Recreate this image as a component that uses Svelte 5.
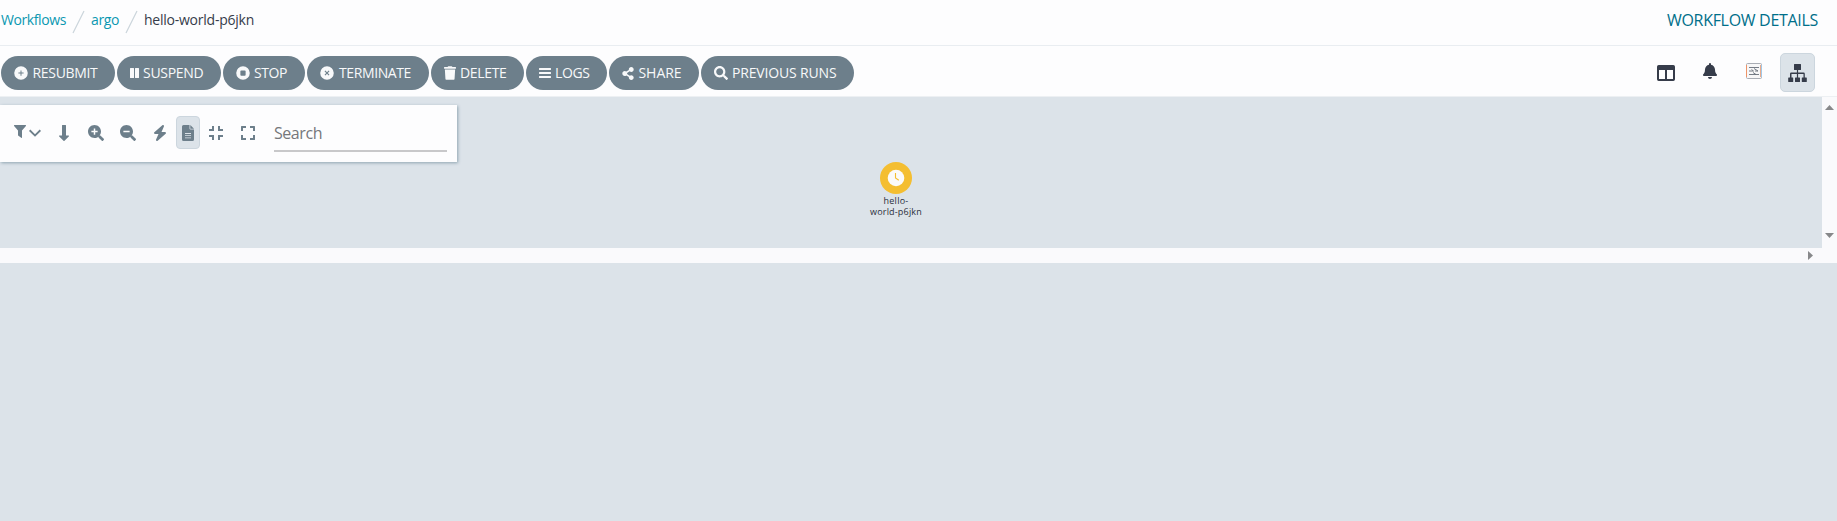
<script>
  const icons = {
    plus: { box: '0 0 512 512', d: 'M256 8a248 248 0 1 0 0 496a248 248 0 0 0 0-496zM238 160h36v78h78v36h-78v78h-36v-78h-78v-36h78z' },
    pause: { box: '0 0 9 10', d: 'M.5 0h3q.5 0 .5.5v9q0 .5-.5.5h-3q-.5 0-.5-.5v-9q0-.5.5-.5zM5.500 0h3q.5 0 .5.5v9q0 .5-.5.5h-3q-.5 0-.5-.5v-9q0-.5.5-.5z' },
    stop: { box: '0 0 512 512', d: 'M256 8a248 248 0 1 0 0 496a248 248 0 0 0 0-496zM192 160h128q32 0 32 32v128q0 32-32 32h-128q-32 0-32-32v-128q0-32 32-32z' },
    times: { box: '0 0 512 512', d: 'M256 8a248 248 0 1 0 0 496a248 248 0 0 0 0-496zM196 166l60 60l60-60l30 30l-60 60l60 60l-30 30l-60-60l-60 60l-30-30l60-60l-60-60z' },
    trash: { box: '0 0 448 512', d: 'M432 32H312l-9.400-18.700A24 24 0 0 0 281.100 0H166.800a23.700 23.700 0 0 0-21.400 13.300L136 32H16A16 16 0 0 0 0 48v32a16 16 0 0 0 16 16h416a16 16 0 0 0 16-16V48a16 16 0 0 0-16-16zM32 128l21.200 339a48 48 0 0 0 47.900 45h245.800a48 48 0 0 0 47.900-45L416 128z' },
    bars: { box: '0 0 12 10', d: 'M.4 0h11.200q.4 0 .4.400v1.200q0 .4-.4.400h-11.200q-.4 0-.4-.4v-1.200q0-.4.400-.4zM.4 4h11.200q.4 0 .4.400v1.200q0 .4-.4.400h-11.200q-.4 0-.4-.4v-1.200q0-.4.400-.4zM.4 8h11.200q.4 0 .4.400v1.200q0 .4-.4.400h-11.200q-.4 0-.4-.4v-1.200q0-.4.400-.4z' },
    share: { box: '0 0 448 512', d: 'M352 320c-22.600 0-43.400 7.800-59.800 20.900l-102.500-64.100a96.600 96.600 0 0 0 0-41.700l102.500-64.100C308.600 184.200 329.400 192 352 192c53 0 96-43 96-96S405 0 352 0s-96 43-96 96c0 7.200.8 14.100 2.300 20.800L155.800 180.900C139.400 167.800 118.600 160 96 160c-53 0-96 43-96 96s43 96 96 96c22.600 0 43.400-7.800 59.800-20.900l102.500 64.100A96.300 96.300 0 0 0 256 416c0 53 43 96 96 96s96-43 96-96s-43-96-96-96z' },
    search: { box: '0 0 512 512', d: 'M505 442.700L405.300 343c-4.500-4.500-10.600-7-17-7H372c27.600-35.300 44-79.700 44-128C416 93.100 322.900 0 208 0S0 93.100 0 208s93.100 208 208 208c48.300 0 92.700-16.400 128-44v16.300c0 6.400 2.500 12.500 7 17l99.700 99.700c9.400 9.400 24.600 9.400 33.900 0l28.300-28.300c9.400-9.400 9.400-24.600.1-34zM208 336c-70.700 0-128-57.200-128-128c0-70.700 57.200-128 128-128c70.700 0 128 57.200 128 128c0 70.700-57.200 128-128 128z' },
    filter: { box: '0 0 12 13', d: 'M.5 0h11q.9.100.4 1L8 5.600V12.400q-.1.800-.8.400L4.400 10.800Q4 10.500 4 10V5.600L.1 1Q-.3.100.5 0z' },
    chevron: { box: '0 0 12 8', d: 'M1.300.6L6 5.200L10.700.6L12 1.900L6 7.700L0 1.900z' },
    down: { box: '0 0 10 16', d: 'M3.400 0h3.200q.4 0 .4.500V10.500h2.500q.9.100.3.900L5.500 15.800q-.5.400-1 0L.2 11.400q-.6-.8.300-.9H3V.5q0-.5.4-.5z' },
    zoomin: { box: '0 0 512 512', d: 'M505 442.700L405.300 343c-4.500-4.500-10.600-7-17-7H372c27.600-35.300 44-79.700 44-128C416 93.100 322.900 0 208 0S0 93.100 0 208s93.100 208 208 208c48.300 0 92.700-16.400 128-44v16.300c0 6.400 2.500 12.500 7 17l99.700 99.700c9.400 9.400 24.600 9.400 33.900 0l28.300-28.300c9.400-9.400 9.400-24.600.1-34zM184 108h48v76h76v48h-76v76h-48v-76h-76v-48h76z' },
    zoomout: { box: '0 0 512 512', d: 'M505 442.700L405.300 343c-4.500-4.500-10.600-7-17-7H372c27.600-35.300 44-79.700 44-128C416 93.100 322.900 0 208 0S0 93.100 0 208s93.100 208 208 208c48.300 0 92.700-16.400 128-44v16.300c0 6.400 2.500 12.500 7 17l99.700 99.700c9.400 9.400 24.600 9.400 33.900 0l28.300-28.300c9.400-9.400 9.400-24.600.1-34zM108 184h200v48H108z' },
    bolt: { box: '32 0 384 512', d: 'M349.400 44.600c5.900-13.700 1.500-29.700-10.600-38.500s-28.600-8-39.900 1.800l-256 224c-10 8.800-13.600 22.900-8.900 35.300S50.700 288 64 288H175.500L98.600 467.400c-5.900 13.700-1.500 29.700 10.600 38.500s28.600 8 39.900-1.800l256-224c10-8.800 13.600-22.900 8.900-35.300s-16.600-20.700-30-20.700H272.500z' },
    file: { box: '0 0 12 16', d: 'M1.500 0H7.500V3.500Q7.500 4.500 8.500 4.500H12V14.500Q12 16 10.500 16H1.500Q0 16 0 14.500V1.500Q0 0 1.500 0zM8.300 0L12 3.700H8.300zM3 8v.9h6V8zM3 10.200v.9h6v-.9zM3 12.400v.9h6v-.9z' },
    compress: { box: '0 0 14 14', d: 'M3 0h2v5H0V3h3zM9 0h2v3h3v2H9zM0 9h5v5H3v-3H0zM9 9h5v2h-3v3H9z' },
    expand: { box: '0 0 14 14', d: 'M.6 0H5v2H2v3H0V.6Q0 0 .6 0zM9 0h4.400q.6 0 .6.600V5h-2V2H9zM0 9h2v3h3v2H.6q-.6 0-.6-.6zM12 9h2v4.400q0 .6-.6.600H9v-2h3z' },
    columns: { box: '0 0 18 16', d: 'M1.700 0h14.600Q18 0 18 1.700v12.600q0 1.700-1.700 1.700H1.700Q0 16 0 14.300V1.700Q0 0 1.700 0zM2 5v9h6V5zM10 5v9h6V5z' },
    bell: { box: '0 0 448 512', d: 'M224 512c35.300 0 63.900-28.700 63.900-64H160.100c0 35.300 28.500 64 63.900 64zm215.400-149.700c-19.300-20.800-55.500-52-55.500-154.300c0-77.700-54.500-139.900-127.900-155.200V32a32 32 0 1 0-64 0v20.800C118.600 68.100 64.100 130.300 64.100 208c0 102.300-36.200 133.500-55.500 154.300A31.200 31.200 0 0 0 0 384c.1 16.400 13 32 32.100 32h383.800c19.100 0 32-15.600 32.100-32a31.200 31.200 0 0 0-8.600-21.700z' },
    sitemap: { box: '0 0 19 18', d: 'M6.500 0h6q.5 0 .5.500v5q0 .5-.5.500H10.100v2.500H15.500q1.300 0 1.300 1.300V13.500h1.500q.5 0 .5.500v3.500q0 .5-.5.500h-4q-.5 0-.5-.5V14q0-.5.500-.5h1.200v-3.500H10.100v3.500h1.400q.5 0 .5.500v3.500q0 .5-.5.500h-4q-.5 0-.5-.5V14q0-.5.500-.5h1.400v-3.500H3.500v3.500h1.200q.5 0 .5.500v3.500q0 .5-.5.500h-4q-.5 0-.5-.5V14q0-.5.500-.5h1.300V9.800q0-1.300 1.300-1.300h5.600V6H6.500q-.5 0-.5-.5v-5q0-.5.500-.5z' }
  };

  const actions = [
    { label: 'RESUBMIT', icon: 'plus', iw: 14, left: 12.5, gap: 5, text: 65, width: 114 },
    { label: 'SUSPEND', icon: 'pause', iw: 9, left: 13, gap: 4, text: 60.5, width: 104 },
    { label: 'STOP', icon: 'stop', iw: 14, left: 12.5, gap: 4.5, text: 33, width: 82 },
    { label: 'TERMINATE', icon: 'times', iw: 14, left: 13, gap: 5, text: 72, width: 122 },
    { label: 'DELETE', icon: 'trash', iw: 12, left: 13, gap: 4, text: 46.5, width: 93 },
    { label: 'LOGS', icon: 'bars', iw: 12, left: 13, gap: 4, text: 34.5, width: 81 },
    { label: 'SHARE', icon: 'share', iw: 12, left: 13, gap: 4.5, text: 43, width: 90 },
    { label: 'PREVIOUS RUNS', icon: 'search', iw: 14, left: 13, gap: 4, text: 104.5, width: 153 }
  ];

  const tools = [
    { icon: 'down', w: 10, h: 16 },
    { icon: 'zoomin', w: 16, h: 16 },
    { icon: 'zoomout', w: 16, h: 16 },
    { icon: 'bolt', w: 12, h: 16 },
    { icon: 'file', w: 12, h: 16, active: true },
    { icon: 'compress', w: 14, h: 14 },
    { icon: 'expand', w: 14, h: 14 }
  ];

  // Tracks a label out or in so that it fills the given width.
  function fit(node, width) {
    const range = document.createRange();
    range.selectNodeContents(node);
    const natural = range.getBoundingClientRect().width;
    const spacing = (width - natural) / node.textContent.length;
    node.style.letterSpacing = `${spacing}px`;
  }
</script>

{#snippet glyph(name, w, h)}
  <svg class="glyph" width={w} height={h} viewBox={icons[name].box} aria-hidden="true">
    <path fill-rule="evenodd" d={icons[name].d} />
  </svg>
{/snippet}

<div class="page">
  <header>
    <nav>
      <a href="#workflows" use:fit={65}>Workflows</a>
      <svg class="slash" width="13" height="24" viewBox="0 0 13 24"><path d="M12 1L1 23" /></svg>
      <a href="#argo" use:fit={28}>argo</a>
      <svg class="slash" width="13" height="24" viewBox="0 0 13 24"><path d="M12 1L1 23" /></svg>
      <span class="current" use:fit={110}>hello-world-p6jkn</span>
    </nav>
    <div class="title"><span use:fit={151}>WORKFLOW DETAILS</span></div>
  </header>

  <div class="bar">
    <div class="actions">
      {#each actions as a}
        <button style:width="{a.width}px" style:padding-left="{a.left}px" style:gap="{a.gap}px">
          {@render glyph(a.icon, a.iw, a.icon === 'pause' || a.icon === 'bars' ? 10 : a.icon === 'share' ? 13 : 14)}
          <span use:fit={a.text}>{a.label}</span>
        </button>
      {/each}
    </div>
    <div class="views">
      <span class="view">{@render glyph('columns', 18, 16)}</span>
      <span class="view bell">{@render glyph('bell', 14, 16)}</span>
      <span class="view bell">
        <svg width="16" height="16" viewBox="0 0 16 16" aria-hidden="true">
          <rect x=".5" y=".5" width="15" height="15" rx="1" fill="#f7f7f8" stroke="#a9adb5" />
          <path d="M.5 2v12" stroke="#ee9468" />
          <path d="M14.500 2v12" stroke="#e9aa8b" />
          <path d="M15.500 2v12" stroke="#9fc9ea" />
          <path d="M3 4.500h10M3 8h4.500l-2-1.500M8 5.500l4 2.500H9M3 11.500h10M7 9.500l3 2" fill="none" stroke="#666e79" stroke-width=".9" />
        </svg>
      </span>
      <span class="view active">{@render glyph('sitemap', 19, 18)}</span>
    </div>
  </div>

  <div class="viewport">
    <main>
      <section class="panel">
        <span class="filter">{@render glyph('filter', 12, 13)}{@render glyph('chevron', 12, 8)}</span>
        <div class="tools">
          {#each tools as t}
            <span class="tool" class:active={t.active}>{@render glyph(t.icon, t.w, t.h)}</span>
          {/each}
        </div>
        <div class="search"><span use:fit={48}>Search</span></div>
      </section>
      <div class="node">
        <svg width="32" height="32" viewBox="0 0 32 32" aria-hidden="true">
          <circle cx="16" cy="16" r="16" fill="#f4be31" />
          <circle cx="16" cy="16" r="8.300" fill="#fbfafa" />
          <path d="M15.500 11v5l3.300 2.300" fill="none" stroke="#f4be31" stroke-width="1.100" />
        </svg>
        <span use:fit={25}>hello-</span>
        <span use:fit={52}>world-p6jkn</span>
      </div>
    </main>
    <div class="vscroll">
      <svg width="9" height="5" viewBox="0 0 9 5"><path d="M4.500 0L9 5H0z" /></svg>
      <svg width="9" height="5" viewBox="0 0 9 5"><path d="M0 0h9L4.500 5z" /></svg>
    </div>
  </div>
  <div class="hscroll">
    <svg width="5" height="9" viewBox="0 0 5 9"><path d="M0 0L5 4.500L0 9z" /></svg>
  </div>
</div>

<style>
  :global(body) { background: #dce3e9; overflow: hidden; }
  .page {
    height: 521px;
    font: 14px/20px "Open Sans", "Noto Sans", sans-serif;
    color: #363c4a;
  }
  svg { display: block; flex: none; }
  .glyph { fill: currentColor; }
  span, a { white-space: nowrap; }
  header {
    box-sizing: border-box;
    height: 46px;
    display: flex;
    justify-content: space-between;
    background: #fdfdfe;
    border-bottom: 1px solid #e9edf1;
  }
  nav { display: flex; align-items: flex-start; padding: 10px 0 0 1px; }
  nav a { color: #0b98b1; text-decoration: none; }
  .slash { margin: 0 6px; fill: none; stroke: #ccd5dc; stroke-width: 1.200; }
  .title { padding: 10px 19px 0 0; font-size: 16px; line-height: 21px; color: #006f8a; }
  .bar {
    box-sizing: border-box;
    height: 51px;
    display: flex;
    justify-content: space-between;
    background: #fdfdfe;
    border-bottom: 1px solid #edf0f3;
  }
  .actions { display: flex; gap: 2px; padding: 10px 0 0 1px; }
  button {
    box-sizing: border-box;
    height: 34px;
    display: flex;
    align-items: center;
    padding: 0;
    border: 0;
    border-radius: 17px;
    background: #6d7f8b;
    color: #f8f9fa;
    font: inherit;
  }
  .views { display: flex; align-items: flex-start; gap: 9px; padding: 7px 22px 0 0; color: #363c4a; }
  .view {
    box-sizing: border-box;
    width: 35px;
    height: 39px;
    display: flex;
    align-items: center;
    justify-content: center;
    border: 1px solid transparent;
    border-radius: 5px;
  }
  .bell { padding-bottom: 3px; }
  .active { background: #dce3e9; border-color: #ccd6de; }
  .viewport { display: flex; height: 151px; }
  main { flex: 1; display: flex; align-items: flex-start; padding-top: 8px; }
  .panel {
    box-sizing: border-box;
    width: 457px;
    height: 57px;
    display: flex;
    align-items: center;
    padding: 0 0 2px 14px;
    background: #fdfdfe;
    color: #6d7f8b;
    box-shadow: 1px 1px 3px #8fa4b1;
  }
  .filter { display: flex; align-items: center; gap: 3px; padding-bottom: 3px; }
  .filter :global(svg:last-child) { margin-top: 4px; }
  .tools { display: flex; gap: 8px; margin-left: 11px; }
  .tool {
    box-sizing: border-box;
    width: 24px;
    height: 33px;
    display: flex;
    align-items: center;
    justify-content: center;
    border: 1px solid transparent;
    border-radius: 4px;
  }
  .tool.active { margin: 0 -4px; background: #dce3e9; border-color: #ccd6de; }
  .search {
    box-sizing: border-box;
    width: 173px;
    height: 38px;
    margin: 0 0 0 14px;
    padding-top: 8px;
    border-bottom: 2px solid #c8c8ca;
    color: #75777b;
    font-size: 16px;
    line-height: 22px;
  }
  .node {
    width: 60px;
    display: flex;
    flex-direction: column;
    align-items: center;
    margin: 57px 0 0 409px;
    font-size: 9px;
    line-height: 11px;
    color: #2b303c;
  }
  .node svg { margin-bottom: 1px; }
  .vscroll {
    box-sizing: border-box;
    width: 15px;
    display: flex;
    flex-direction: column;
    align-items: center;
    justify-content: space-between;
    padding: 8px 0 10px;
    background: #fafafc;
    fill: #87888a;
  }
  .hscroll {
    box-sizing: border-box;
    height: 15px;
    display: flex;
    align-items: center;
    justify-content: flex-end;
    padding-right: 24px;
    background: #fafafc;
    fill: #87888a;
  }
</style>
